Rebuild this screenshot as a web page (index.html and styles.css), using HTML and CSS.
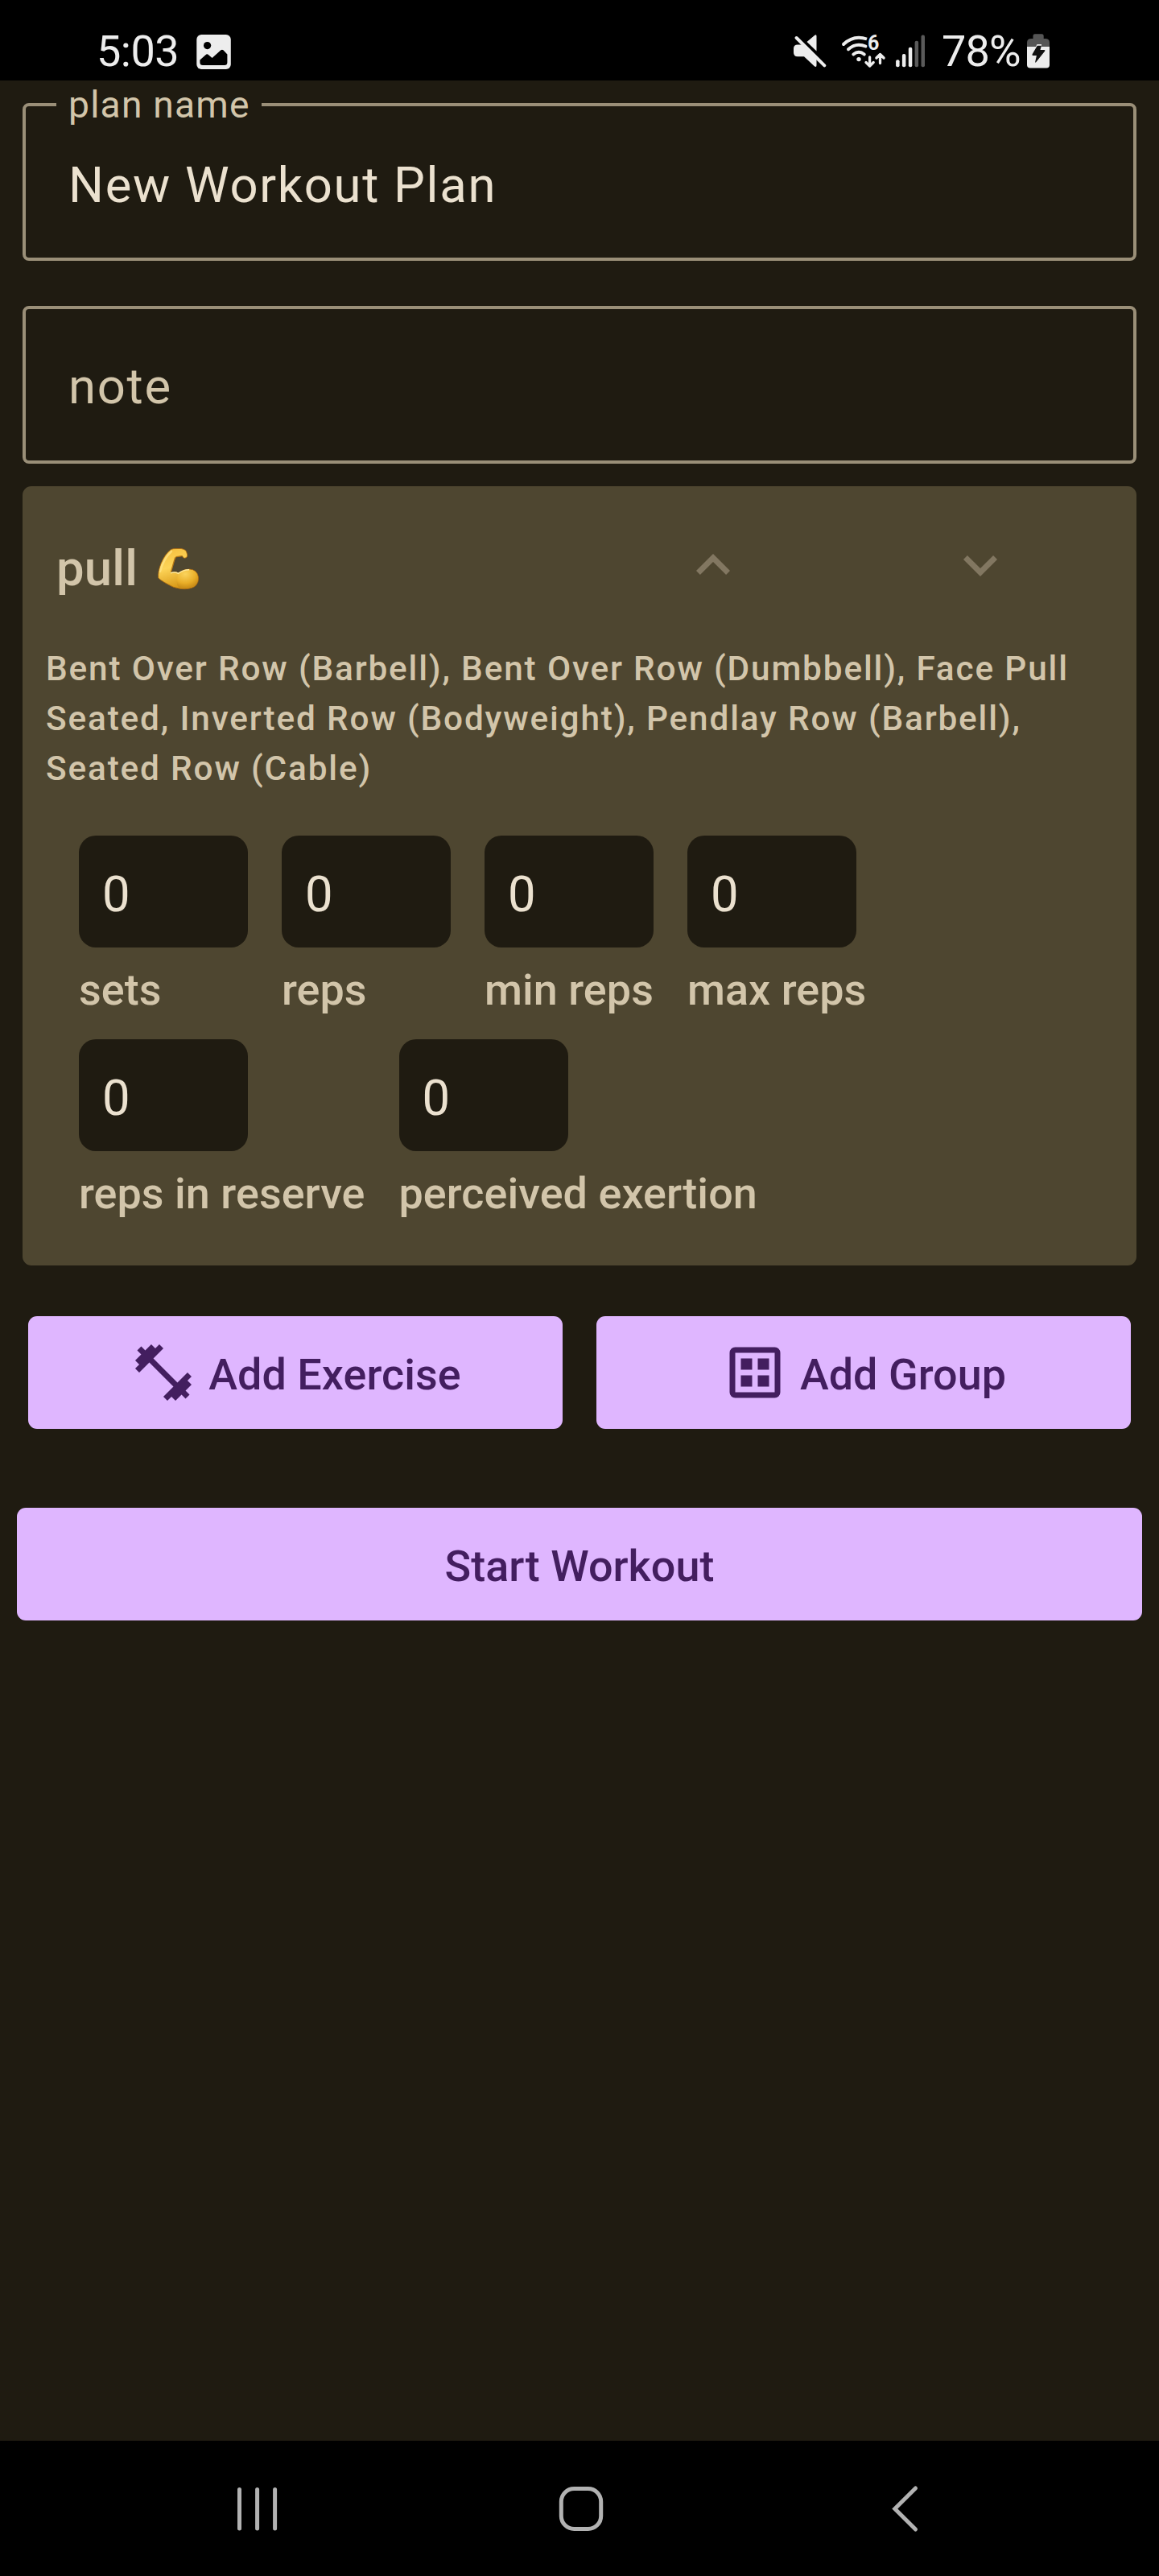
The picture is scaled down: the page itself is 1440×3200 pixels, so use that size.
FILE: index.html
```html
<!DOCTYPE html>
<html lang="en">
<head>
<meta charset="utf-8">
<title>New Workout Plan</title>
<link rel="stylesheet" href="styles.css">
</head>
<body>
<div class="screen">
  <header class="status-bar">
    <div class="status-left">
      <span class="clock">5:03</span>
      <svg class="icon-picture" width="43" height="43" viewBox="244 43 43 43">
        <rect x="244.3" y="43" width="42.5" height="43" rx="6" fill="#ededed"/>
        <circle cx="257.6" cy="56.6" r="4.6" fill="#000"/>
        <path d="M248.4 74.5 256.3 67.6q1.2-.9 2.3.1l5 4.2 10.8-9.6q1.6-1.3 3 0l5 5.2V77.5q0 3.5-3.5 3.5H252q-3.600 0-3.600-3.500z" fill="#000"/>
      </svg>
    </div>
    <div class="status-right">
      <svg class="icon-mute" width="44" height="46" viewBox="984 41 44 46">
        <path d="M1002.500 52 1012 43.900q2.500-1.800 2.500 1V63.500z" fill="#ededed"/>
        <path d="M991 55.500h6l17.500 17V81q0 3-2.700 1.200L999 70.300h-8q-5 0-5-5v-5q0-4.800 5-4.800z" fill="#ededed"/>
        <path d="M991 44.500 1026 79" stroke="#000" stroke-width="3" fill="none"/>
        <path d="M989.600 47 1024.300 81.300" stroke="#ededed" stroke-width="4" stroke-linecap="round"/>
      </svg>
      <svg class="icon-wifi" width="56" height="56" viewBox="1045 31 56 56">
        <g fill="none" stroke="#ededed" stroke-width="3.900" stroke-linecap="round" stroke-linejoin="round">
          <path d="M1048 55Q1057 46.800 1067 46.800 1072 46.800 1077 48.500" stroke-linecap="butt"/>
          <path d="M1048 55l.1-.1M1054 61.300Q1060 55.700 1067 55.700 1071.500 55.700 1075.500 57.500"/>
          <path d="M1060.300 67.500Q1067 62 1073.800 67.500"/>
          <path d="M1080.600 71V81.500M1076 77.500l4.600 4.600 4.600-4.600M1093.500 78.500V67.500M1088.900 72l4.600-4.600 4.600 4.600" stroke-width="3.300"/>
        </g>
        <circle cx="1067" cy="73.600" r="2.700" fill="#ededed"/>
        <text class="wifi-band" x="1078" y="62">6</text>
      </svg>
      <svg class="icon-signal" width="38" height="42" viewBox="1112 42 38 42">
        <g fill="#ededed">
          <rect x="1113.100" y="74.200" width="4.500" height="9" rx="2"/>
          <rect x="1120.900" y="67" width="4.500" height="16.200" rx="2"/>
          <rect x="1128.800" y="58.800" width="4.500" height="24.400" rx="2"/>
        </g>
        <g fill="#5a5a5a">
          <rect x="1136.600" y="50.800" width="4.500" height="32.400" rx="2"/>
          <rect x="1144.500" y="43.400" width="4.500" height="39.800" rx="2"/>
        </g>
      </svg>
      <span class="battery-level">78%</span>
      <svg class="icon-battery" width="28" height="44" viewBox="1276 42 28 44">
        <path d="M1283.500 48V44.500q0-2.300 2.300-2.300h8.600q2.300 0 2.300 2.300V48h2q5.300 0 5.300 5v5.200h-28V53q0-5 5.300-5z" fill="#555"/>
        <path d="M1276 58h28v22.500q0 4-4 4h-20q-4 0-4-4z" fill="#ededed"/>
        <path d="M1287 58l1.500-3h5.500v3z" fill="#ededed"/>
        <path d="M1288.300 57.500q.3-.7 1-.7h4.600l-1.400 5.200h5q1.500.2.700 1.500l-11 13.800q-1.200 1.200-1-.5l1.700-7.800h-4.600q-1.200-.2-.8-1.400z" fill="#111"/>
      </svg>
    </div>
  </header>

  <main class="content">
    <div class="field">
      <span class="field-label">plan name</span>
      <span class="field-value">New Workout Plan</span>
    </div>
    <div class="field">
      <span class="field-placeholder">note</span>
    </div>

    <section class="card">
      <div class="card-header">
        <h2 class="card-title">pull</h2>
        <svg class="emoji" role="img" aria-label="flexed biceps" width="54" height="54" viewBox="196 680 54 54">
          <defs>
            <linearGradient id="skin" x1="0" y1="0" x2="0.300" y2="1">
              <stop offset="0" stop-color="#f3bc3c"/>
              <stop offset=".5" stop-color="#fdd458"/>
              <stop offset="1" stop-color="#d99a18"/>
            </linearGradient>
            <radialGradient id="muscle" cx=".4" cy=".25" r=".8">
              <stop offset="0" stop-color="#ffdd6a"/>
              <stop offset=".6" stop-color="#edb22a"/>
              <stop offset="1" stop-color="#b97d12"/>
            </radialGradient>
          </defs>
          <path d="M213.500 682.500Q216 681.300 221 681.500H226Q231 682 232.500 685L233.800 689.500Q234 693 230.500 693.300 228.500 693.300 227.500 690.800L219.500 692Q217.800 695 216 702L213.300 711.500Q218 709.200 223 711.800 229 706.800 236 707 246 707.500 247.500 717 248.200 724 243 728.500 236 732.500 226 731.500 217 730.800 208 725 200 720.500 197.800 718 196.800 711 201 700 206 688 213.500 682.500z" fill="url(#skin)" stroke="#a8660f" stroke-width=".8"/>
          <path d="M222 713.500Q229 707.300 236 707.400 245.500 708 247 717 247.500 724 242.500 728Q235 732 226 730.500 218 729.500 222 713.500z" fill="url(#muscle)" opacity=".75"/>
          <path d="M213 711.800Q218 709.800 222.500 712.300 229 707.600 236 707.700" fill="none" stroke="#ffe99a" stroke-width="1.500"/>
          <path d="M214 685Q204 694 200 710" fill="none" stroke="#ffe58a" stroke-width="2.500" stroke-linecap="round" opacity=".7"/>
          <path d="M219.500 691.500 227.500 690.500M218.500 692.500 213.500 710" fill="none" stroke="#b97a14" stroke-width="1.200" opacity=".8"/>
        </svg>
        <div class="card-actions">
          <svg class="chevron" viewBox="0 0 24 24"><path d="M7.410 15.410 12 10.830l4.590 4.580L18 14l-6-6-6 6z"/></svg>
          <svg class="chevron" viewBox="0 0 24 24"><path d="M7.410 8.590 12 13.170l4.590-4.580L18 10l-6 6-6-6z"/></svg>
        </div>
      </div>
      <p class="exercise-list">Bent Over Row (Barbell), Bent Over Row (Dumbbell), Face Pull Seated, Inverted Row (Bodyweight), Pendlay Row (Barbell), Seated Row (Cable)</p>
      <div class="params">
        <div class="param-row">
          <div class="param"><div class="param-input">0</div><div class="param-label">sets</div></div>
          <div class="param"><div class="param-input">0</div><div class="param-label">reps</div></div>
          <div class="param"><div class="param-input">0</div><div class="param-label">min reps</div></div>
          <div class="param"><div class="param-input">0</div><div class="param-label">max reps</div></div>
        </div>
        <div class="param-row">
          <div class="param"><div class="param-input">0</div><div class="param-label">reps in reserve</div></div>
          <div class="param"><div class="param-input">0</div><div class="param-label">perceived exertion</div></div>
        </div>
      </div>
    </section>

    <div class="add-row">
      <div class="button">
        <svg class="button-icon" viewBox="0 0 24 24"><path d="M20.570 14.860 22 13.430 20.570 12 17 15.570 8.430 7 12 3.430 10.570 2 9.140 3.430 7.710 2 5.570 4.140 4.140 2.710 2.710 4.140l1.430 1.430L2 7.710l1.430 1.430L2 10.570 3.430 12 7 8.430 15.570 17 12 20.570 13.430 22l1.430-1.430L16.290 22l2.140-2.140 1.430 1.430 1.430-1.430-1.430-1.430L22 16.290z"/></svg>
        <span class="button-text">Add Exercise</span>
      </div>
      <div class="button">
        <svg class="button-icon" viewBox="0 0 24 24"><path fill-rule="evenodd" d="M5 3h14a2 2 0 0 1 2 2v14a2 2 0 0 1-2 2H5a2 2 0 0 1-2-2V5a2 2 0 0 1 2-2zM5 5v14h14V5zM7 7h4v4H7zM13 7h4v4h-4zM7 13h4v4H7zM13 13h4v4h-4z"/></svg>
        <span class="button-text">Add Group</span>
      </div>
    </div>
    <div class="button button-start"><span class="button-text">Start Workout</span></div>
  </main>

  <nav class="nav-bar">
    <svg width="60" height="60" viewBox="290 3086 60 60"><path d="M297.500 3092.500V3141M319.600 3092.500V3141M341.600 3092.500V3141"/></svg>
    <svg width="60" height="60" viewBox="692.500 3086 60 60"><rect x="696.800" y="3091.500" width="49.400" height="50" rx="16"/></svg>
    <svg width="60" height="60" viewBox="1095 3086 60 60"><path d="M1137.500 3091 1111.800 3116.500 1137.500 3142"/></svg>
  </nav>
</div>
</body>
</html>
```
FILE: styles.css
```css
* {
  box-sizing: border-box;
}

body {
  margin: 0;
  background: #1f1b11;
  font-family: Roboto, "Liberation Sans", sans-serif;
}

svg {
  display: block;
  flex: none;
}

.screen {
  display: flex;
  flex-direction: column;
  width: 1440px;
  height: 3200px;
  overflow: hidden;
}

/* Status bar */

.status-bar {
  display: flex;
  justify-content: space-between;
  height: 100px;
  padding: 0 136px 0 120px;
  background: #000;
  color: #ededed;
  font-size: 54px;
  line-height: 128px;
}

.status-left,
.status-right {
  display: flex;
  align-items: flex-start;
}

.clock {
  width: 124px;
  letter-spacing: -0.5px;
}

.icon-picture {
  margin-top: 43px;
}

.icon-mute {
  margin: 41px 17px 0 0;
}

.icon-wifi {
  margin: 31px 11px 0 0;
}

.wifi-band {
  fill: #ededed;
  font-size: 25px;
  font-weight: 700;
}

.icon-signal {
  margin: 42px 20px 0 0;
}

.battery-level {
  width: 106px;
  letter-spacing: -0.8px;
  white-space: nowrap;
}

.icon-battery {
  margin-top: 42px;
}

/* Page content */

.content {
  flex: 1;
  padding: 28px 28px 0;
}

.field {
  position: relative;
  display: flex;
  align-items: center;
  height: 196px;
  margin-bottom: 56px;
  padding: 7px 53px 0;
  border: 4px solid #9a8f78;
  border-radius: 8px;
  font-size: 61.6px;
  letter-spacing: 1.7px;
}

.field + .field {
  margin-bottom: 28px;
  padding-top: 4px;
}

.field-label {
  position: absolute;
  top: -31px;
  left: 38px;
  padding: 0 14px 0 15px;
  background: #1f1b11;
  color: #d2c5aa;
  font-size: 46.2px;
  line-height: 58px;
  letter-spacing: 1.2px;
}

.field-value {
  color: #ebe1cf;
}

.field-placeholder {
  color: #d2c5aa;
}

/* Exercise group card */

.card {
  height: 968px;
  border-radius: 11px;
  background: #4e4630;
  color: #d2c5aa;
}

.card-header {
  display: flex;
  align-items: center;
  height: 196px;
  padding: 0 152px 0 42px;
}

.card-title {
  width: 125px;
  margin: 8px 0 0;
  font-size: 61.6px;
  font-weight: 500;
  letter-spacing: 0.2px;
}

.emoji {
  margin-top: 9px;
}

.card-actions {
  display: flex;
  gap: 248px;
  margin-left: auto;
}

.chevron {
  width: 84px;
  height: 84px;
  fill: #827761;
}

.exercise-list {
  margin: 0;
  padding: 0 28px 0 29px;
  font-size: 42.35px;
  font-weight: 500;
  line-height: 62px;
  letter-spacing: 1.83px;
}

.params {
  display: flex;
  flex-direction: column;
  gap: 23px;
  padding: 52px 70px 0;
}

.param-row {
  display: flex;
  gap: 42px;
}

.param-input {
  width: 210px;
  height: 139px;
  padding-left: 29px;
  border-radius: 21px;
  background: #1f1b11;
  color: #ebe1cf;
  font-size: 61.6px;
  line-height: 146px;
  letter-spacing: 1.75px;
}

.param-label {
  margin-top: 14px;
  font-size: 53.9px;
  font-weight: 500;
  line-height: 77px;
  letter-spacing: 0.05px;
  white-space: nowrap;
}

/* Buttons */

.add-row {
  display: flex;
  gap: 42px;
  margin: 63px 7px 98px;
}

.button {
  display: flex;
  flex: 1;
  align-items: center;
  justify-content: center;
  gap: 14px;
  height: 140px;
  border-radius: 11px;
  background: #dfb6ff;
  color: #431e5f;
  font-size: 53.9px;
  font-weight: 500;
  letter-spacing: 0.05px;
}

.button-start {
  margin: 0 -7px;
}

.button-icon {
  width: 84px;
  height: 84px;
  fill: #431e5f;
}

.button-text {
  padding-top: 5px;
  line-height: 77px;
}

/* System navigation */

.nav-bar {
  display: flex;
  justify-content: space-between;
  height: 168px;
  padding: 54px 285px 0 290px;
  background: #000;
}

.nav-bar svg {
  fill: none;
  stroke: #b2b2b2;
  stroke-width: 5px;
  stroke-linecap: round;
  stroke-linejoin: miter;
}
```
